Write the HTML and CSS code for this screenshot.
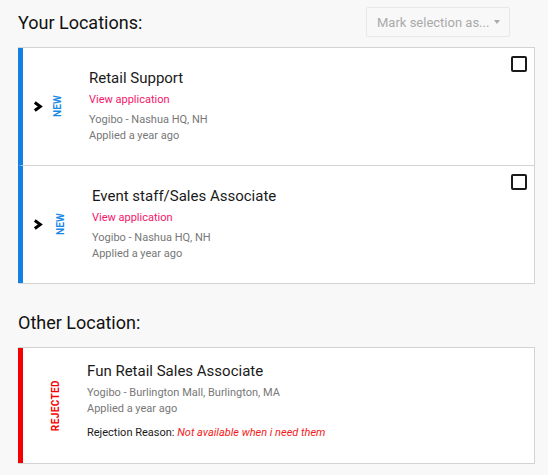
FILE: index.html
```html
<!DOCTYPE html>
<html lang="en">
<head>
<meta charset="utf-8">
<title>Locations</title>
<link rel="stylesheet" href="styles.css">
</head>
<body>
<div class="page">
  <div class="section-head">
    <h2 class="section-title">Your Locations:</h2>
    <div class="select">
      <span class="select-label">Mark selection as...</span>
      <span class="select-caret"></span>
    </div>
  </div>

  <div class="card-list">
    <div class="card card--new">
      <svg class="toggle" width="10" height="11" viewBox="0 0 10 11"><polyline points="1.8,1.5 7.3,5.5 1.8,9.5" fill="none" stroke="#000" stroke-width="3" stroke-linejoin="miter"/></svg>
      <div class="status status--new"><span class="status-text">NEW</span></div>
      <div class="card-body">
        <div class="job-title">Retail Support</div>
        <a class="view-link" href="#">View application</a>
        <div class="meta">Yogibo - Nashua HQ, NH</div>
        <div class="meta">Applied a year ago</div>
      </div>
      <span class="checkbox"></span>
    </div>
    <div class="card card--new card--shift">
      <svg class="toggle" width="10" height="11" viewBox="0 0 10 11"><polyline points="1.8,1.5 7.3,5.5 1.8,9.5" fill="none" stroke="#000" stroke-width="3" stroke-linejoin="miter"/></svg>
      <div class="status status--new"><span class="status-text">NEW</span></div>
      <div class="card-body">
        <div class="job-title">Event staff/Sales Associate</div>
        <a class="view-link" href="#">View application</a>
        <div class="meta">Yogibo - Nashua HQ, NH</div>
        <div class="meta">Applied a year ago</div>
      </div>
      <span class="checkbox"></span>
    </div>
  </div>

  <h2 class="section-title section-title--other">Other Location:</h2>

  <div class="card-list">
    <div class="card card--rejected">
      <div class="status status--rejected"><span class="status-text">REJECTED</span></div>
      <div class="card-body card-body--rejected">
        <div class="job-title">Fun Retail Sales Associate</div>
        <div class="meta meta--first">Yogibo - Burlington Mall, Burlington, MA</div>
        <div class="meta">Applied a year ago</div>
        <div class="reason">Rejection Reason: <em class="reason-text">Not available when i need them</em></div>
      </div>
    </div>
  </div>
</div>
</body>
</html>
```

FILE: styles.css
```css
* { box-sizing: border-box; }
html, body {
  margin: 0;
  padding: 0;
  background: #f8f8f8;
  font-family: Roboto, "Liberation Sans", Arial, sans-serif;
  color: #222;
}
.page {
  width: 535px;
  padding: 7px 0 0 18px;
}
.section-head {
  display: flex;
  justify-content: space-between;
  align-items: center;
  margin-bottom: 10px;
}
.section-title {
  margin: 0;
  font-size: 18px;
  line-height: 21px;
  font-weight: 400;
  color: #111;
}
.section-title--other {
  margin: 28px 0 14px;
}
.select {
  width: 144px;
  height: 30px;
  margin-right: 25px;
  border: 1px solid #e8e8e8;
  border-radius: 2px;
  display: flex;
  align-items: center;
  padding-left: 10px;
}
.select-label {
  font-size: 13px;
  color: #aaa;
}
.select-caret {
  width: 0;
  height: 0;
  margin-left: 5px;
  border-left: 3.5px solid transparent;
  border-right: 3.5px solid transparent;
  border-top: 4px solid #aaa;
}
.card-list {
  background: #fff;
  border: 1px solid #d3d3d3;
  border-left: none;
}
.card {
  display: flex;
  align-items: center;
  border-left: 5px solid #1380e3;
}
.card + .card {
  border-top: 1px solid #d3d3d3;
}
.card--rejected {
  border-left-color: #f40000;
}
.toggle {
  flex: none;
  margin-left: 10px;
  display: block;
}
.status {
  flex: none;
  width: 12px;
  display: flex;
  justify-content: center;
}
.status--new { margin-left: 9px; }
.card--shift .status--new { margin-left: 12px; }
.status--rejected { margin-left: 27px; }
.status-text {
  writing-mode: vertical-rl;
  transform: rotate(180deg);
  font-size: 10px;
  font-weight: 700;
  line-height: 12px;
  letter-spacing: 0.2px;
}
.status--new .status-text { color: #1a88e6; }
.status--rejected .status-text { color: #f40000; letter-spacing: 0.4px; }
.card-body {
  flex: 1;
  margin-left: 25px;
  padding: 21px 0 21px;
}
.card-body--rejected {
  padding: 14px 0 22px;
}
.job-title {
  font-size: 15px;
  line-height: 18px;
  color: #1a1a1a;
}
.view-link {
  display: block;
  margin-top: 5px;
  margin-bottom: 4px;
  font-size: 11px;
  line-height: 16px;
  color: #f5166a;
  text-decoration: none;
}
.meta {
  font-size: 11px;
  line-height: 16px;
  color: #777;
}
.meta--first { margin-top: 5px; }
.reason {
  margin-top: 8px;
  font-size: 11px;
  line-height: 16px;
  color: #1a1a1a;
}
.reason-text {
  color: #f41a1a;
  font-style: italic;
}
.checkbox {
  flex: none;
  align-self: flex-start;
  width: 16px;
  height: 16px;
  margin: 8px 7px 0 0;
  border: 2px solid #1a1a1a;
  border-radius: 2px;
}
```
